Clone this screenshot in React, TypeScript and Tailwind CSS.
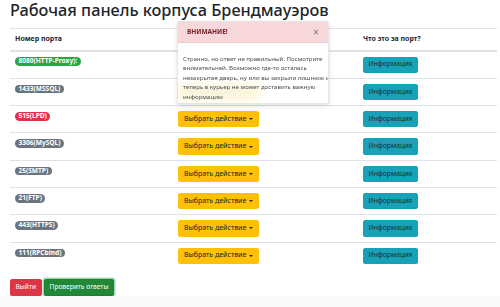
import React from "react";

const rows: { port: string; color: string; select: boolean }[] = [
  { port: "8080(HTTP-Proxy):", color: "bg-[#28a745]", select: false },
  { port: "1433(MSSQL)", color: "bg-[#6c757d]", select: true },
  { port: "515(LPD)", color: "bg-[#dc3545]", select: true },
  { port: "3306(MySQL)", color: "bg-[#6c757d]", select: true },
  { port: "25(SMTP)", color: "bg-[#6c757d]", select: true },
  { port: "21(FTP)", color: "bg-[#6c757d]", select: true },
  { port: "443(HTTPS)", color: "bg-[#6c757d]", select: true },
  { port: "111(RPCbind)", color: "bg-[#6c757d]", select: true },
];

export default function App() {
  return (
    <div
      className="relative min-h-[307px] bg-white text-[#212529] flex flex-col"
      style={{ fontFamily: '"Noto Sans", "Open Sans", sans-serif' }}
    >
      <div className="pl-[10px] pr-[3px]">
        <h1 className="text-[16.3px] leading-[21px] font-medium mb-[7px] whitespace-nowrap">
          Рабочая панель корпуса Брендмауэров
        </h1>
        <div className="text-[7px] leading-[10.5px]">
          <div className="grid grid-cols-[163px_185px_1fr] border-t border-[#dee2e6] border-b-2 font-bold">
            <div className="px-[5px] py-[5px]">Номер порта</div>
            <div className="px-[5px] py-[5px]" />
            <div className="px-[5px] py-[5px]">Что это за порт?</div>
          </div>
          {rows.map((r, i) => (
            <div
              key={r.port}
              className={`grid grid-cols-[163px_185px_1fr] ${i === 0 ? "" : "border-t"} border-[#dee2e6]`}
            >
              <div className="px-[5px] py-[5px] items-start">
                <div className="h-[10.5px] flex items-center">
                  <span
                    className={`${r.color} text-white font-bold text-[6.6px] leading-none px-[3.4px] py-[1px] rounded-full`}
                  >
                    {r.port}
                  </span>
                </div>
              </div>
              <div className="px-[5px] py-[5px]">
                {r.select ? (
                  <button className="h-[16.3px] bg-[#ffc107] border border-[#ffc107] rounded-[2px] px-[5px] flex items-center text-[7px] text-[#212529]">
                    Выбрать действие
                    <span className="ml-[2.5px] w-0 h-0 border-l-[2.2px] border-r-[2.2px] border-t-[2.5px] border-l-transparent border-r-transparent border-t-[#212529]" />
                  </button>
                ) : (
                  <div className="h-[16.3px]" />
                )}
              </div>
              <div className="px-[5px] py-[5px]">
                <button className="h-[16.3px] bg-[#17a2b8] border border-[#17a2b8] rounded-[2px] px-[4.5px] flex items-center text-[6.8px] text-[#1f2d33]">
                  Информация
                </button>
              </div>
            </div>
          ))}
        </div>
        <div className="flex gap-[2px] mt-[10px] text-[6.6px] leading-[10.5px]">
          <button className="h-[17px] px-[4.5px] bg-[#dc3545] border border-[#dc3545] rounded-[2px] text-white">
            Выйти
          </button>
          <button className="h-[17px] px-[5px] bg-[#218838] border border-[#1e7e34] rounded-[2px] text-white shadow-[0_0_0_1.5px_rgba(72,180,97,0.5)]">
            Проверить ответы
          </button>
        </div>
      </div>
      <div className="flex-1 bg-[#f8f9fa] mt-0" />

      <div className="absolute left-[177px] top-[21px] w-[152px] bg-white/85 backdrop-blur-[4px] border border-black/10 rounded-[2px] shadow-[0_2px_5px_rgba(0,0,0,0.12)] overflow-hidden">
        <div className="h-[21px] bg-[#f8d7da] border-b border-black/5 flex items-center justify-between pl-[9px] pr-[9px]">
          <span className="text-[6.5px] font-bold text-[#721c24]">ВНИМАНИЕ!</span>
          <span className="text-[10px] leading-none text-[#6c757d]">×</span>
        </div>
        <div className="px-[5px] pt-[11px] pb-[2px] text-[6.1px] leading-[9.4px] text-[#495057] whitespace-nowrap">
          Странно, но ответ не правильный. Посмотрите
          <br />
          внимательней. Возможно где-то осталась
          <br />
          незакрытая дверь, ну или вы закрыли лишнюю и
          <br />
          теперь в курьер не может доставить важную
          <br />
          информацию
        </div>
      </div>
    </div>
  );
}
